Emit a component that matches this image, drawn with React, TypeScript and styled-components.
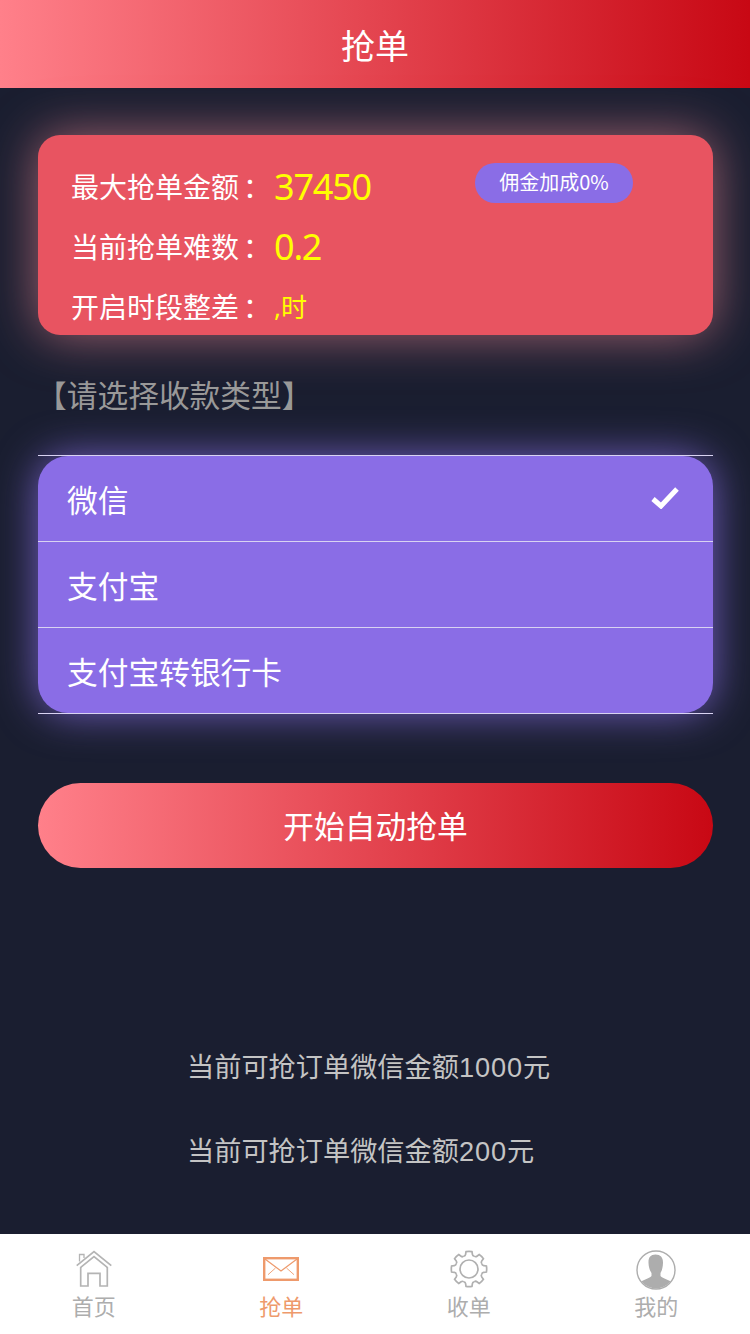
import React from 'react';
import styled, { createGlobalStyle } from 'styled-components';

const GlobalStyle = createGlobalStyle`
  html, body {
    margin: 0;
    padding: 0;
    background: #1a1e30;
  }
  * {
    box-sizing: border-box;
  }
`;

const Page = styled.div`
  width: 750px;
  height: 1334px;
  display: flex;
  flex-direction: column;
  background: #1a1e30;
  font-family: 'Noto Sans CJK SC', 'Noto Sans', sans-serif;
  overflow: hidden;
`;

const Header = styled.div`
  height: 88px;
  flex: none;
  display: flex;
  align-items: center;
  justify-content: center;
  background: linear-gradient(to right, #ff808a, #c80814);
  color: #fff;
  font-size: 34px;
`;

const Main = styled.div`
  flex: 1;
  padding: 47px 37px 0 38px;
`;

const InfoCard = styled.div`
  position: relative;
  height: 200px;
  border-radius: 22px;
  background: #e85461;
  box-shadow: 0 0 50px rgba(255, 145, 155, 0.6);
  padding: 21px 33px 0;
  overflow: hidden;
`;

const InfoRow = styled.div`
  height: 60px;
  display: flex;
  align-items: center;
  color: #fff;
  font-size: 28px;
`;

const InfoLabel = styled.span`
  width: 203px;
  flex: none;
  white-space: nowrap;
`;

const Colon = styled.span`
  display: inline-block;
  transform: translateX(4px);
`;

const InfoValue = styled.span<{ $small?: boolean }>`
  color: #ffff00;
  font-family: 'Noto Sans', 'Noto Sans CJK SC', sans-serif;
  font-size: ${props => (props.$small ? '26px' : '36px')};
  letter-spacing: ${props => (props.$small ? '0' : '-1.2px')};
`;

const BonusBadge = styled.div`
  position: absolute;
  left: 437px;
  top: 28px;
  width: 158px;
  height: 40px;
  padding-bottom: 4px;
  border-radius: 20px;
  background: #8a6de6;
  color: #fff;
  font-size: 20px;
  display: flex;
  align-items: center;
  justify-content: center;
`;

const SectionTitle = styled.div`
  height: 120px;
  margin-left: -2px;
  padding-top: 35px;
  color: #999;
  font-size: 30.72px;
  line-height: 48px;
  white-space: nowrap;
`;

const TypeList = styled.div`
  border-radius: 30px;
  background: #8a6de6;
  box-shadow: 0 0 42px rgba(150, 120, 250, 0.72);
`;

const TypeRow = styled.div`
  height: 85px;
  display: flex;
  align-items: center;
  justify-content: space-between;
  padding: 0 34px 1px 29px;
  color: #fff;
  font-size: 30.72px;
`;

const Rule = styled.div`
  position: relative;
  height: 1px;
  background: #d9d3f2;
`;

const StartButton = styled.div`
  margin-top: 69px;
  height: 85px;
  padding-bottom: 2px;
  border-radius: 43px;
  background: linear-gradient(to right, #ff808a, #c80814);
  color: #fff;
  font-size: 30.72px;
  display: flex;
  align-items: center;
  justify-content: center;
`;

const OrderList = styled.div`
  margin-top: 179px;
  display: flex;
  flex-direction: column;
  gap: 42px;
  padding-left: 149px;
`;

const OrderLine = styled.div`
  height: 42px;
  line-height: 42px;
  color: #c4c4c4;
  font-family: 'Liberation Sans', 'Noto Sans CJK SC', sans-serif;
  font-size: 27.2px;
  white-space: nowrap;
`;

const Amount = styled.span`
  letter-spacing: 0.9px;
`;

const TabBar = styled.div`
  height: 100px;
  flex: none;
  background: #fff;
  display: grid;
  grid-template-columns: repeat(4, 1fr);
`;

const Tab = styled.div<{ $active?: boolean }>`
  display: flex;
  flex-direction: column;
  align-items: center;
  color: ${props => (props.$active ? '#ee9a6c' : '#adadad')};
  font-size: 22px;
  line-height: 30px;
`;

const TabIcon = styled.div`
  height: 56px;
  padding-top: 16px;
  display: flex;
  align-items: flex-start;
  justify-content: center;
`;

const HomeIcon = () => (
  <svg width="38" height="38" viewBox="0 0 38 38" fill="none" stroke="#b4b4b4" strokeWidth="1.7">
    <path d="M1.7 15.7 L19 1.5 L36.3 15.7" />
    <path d="M5.7 17.3 L19 6.7 L32.3 17.3" />
    <path d="M4.5 11.5 V4.5 H9 V8" strokeWidth="1.3" />
    <path d="M5.7 17 V36 H13 V23.3 H25 V36 H32.3 V17" />
  </svg>
);

const MailIcon = () => (
  <svg width="36" height="24" viewBox="0 0 36 24" fill="none" stroke="#ee9a6c" style={{ marginTop: 7 }}>
    <rect x="1.2" y="1.2" width="33.6" height="21.6" strokeWidth="2.4" />
    <path d="M2 2 L18 14 L34 2" strokeWidth="1.2" />
    <path d="M5 17.7 L12.5 11 M31 17.7 L23.5 11" strokeWidth="0.9" />
  </svg>
);

const GearIcon = () => {
  const teeth = [0, 45, 90, 135, 180, 225, 270, 315];
  return (
    <svg width="38" height="38" viewBox="-19 -19 38 38" fill="none" stroke="#b0b0b0" strokeWidth="1.7">
      <circle r="9" />
      {teeth.map(a => (
        <path
          key={a}
          transform={`rotate(${a})`}
          d="M-5.3 -12.8 Q-3.6 -13 -3.4 -14.6 L-3 -17.4 Q0 -18 3 -17.4 L3.4 -14.6 Q3.6 -13 5.3 -12.8"
        />
      ))}
    </svg>
  );
};

const UserIcon = () => (
  <svg width="40" height="40" viewBox="0 0 40 40">
    <defs>
      <clipPath id="user-clip">
        <circle cx="20" cy="20" r="18.5" />
      </clipPath>
    </defs>
    <g clipPath="url(#user-clip)" fill="#adadad">
      <path d="M19.5 4.5 C14.5 4.5 12.3 7.5 12.5 13 C12.7 17.5 13.8 20.5 15.5 23 V26 C13 28.5 7 29.5 3.5 33 V40 H36.5 V33 C33 29.5 27 28.5 24.5 26 V23 C26 20.5 26.8 17.5 27 13 C27.2 7.5 24.5 4.5 19.5 4.5 Z" />
    </g>
    <circle cx="20" cy="20" r="19" fill="none" stroke="#adadad" strokeWidth="1.4" />
  </svg>
);

const CheckIcon = () => (
  <svg width="28" height="22" viewBox="0 0 28 22" fill="none" stroke="#fff" strokeWidth="5">
    <path d="M2 12 L10 19 L26 2" />
  </svg>
);

const types = ['微信', '支付宝', '支付宝转银行卡'];

const amounts = ['1000', '200'];

const tabs = [
  { label: '首页', icon: <HomeIcon /> },
  { label: '抢单', icon: <MailIcon />, active: true },
  { label: '收单', icon: <GearIcon /> },
  { label: '我的', icon: <UserIcon /> },
];

export default function App() {
  return (
    <Page>
      <GlobalStyle />
      <Header>抢单</Header>
      <Main>
        <InfoCard>
          <InfoRow>
            <InfoLabel>最大抢单金额<Colon>：</Colon></InfoLabel>
            <InfoValue>37450</InfoValue>
          </InfoRow>
          <InfoRow>
            <InfoLabel>当前抢单难数<Colon>：</Colon></InfoLabel>
            <InfoValue>0.2</InfoValue>
          </InfoRow>
          <InfoRow>
            <InfoLabel>开启时段整差<Colon>：</Colon></InfoLabel>
            <InfoValue $small>,时</InfoValue>
          </InfoRow>
          <BonusBadge>佣金加成0%</BonusBadge>
        </InfoCard>
        <SectionTitle>【请选择收款类型】</SectionTitle>
        <Rule />
        <TypeList>
          {types.map((name, i) => (
            <React.Fragment key={name}>
              <TypeRow>
                {name}
                {i === 0 && <CheckIcon />}
              </TypeRow>
              {i < types.length - 1 && <Rule />}
            </React.Fragment>
          ))}
        </TypeList>
        <Rule />
        <StartButton>开始自动抢单</StartButton>
        <OrderList>
          {amounts.map(amount => (
            <OrderLine key={amount}>
              当前可抢订单微信金额<Amount>{amount}</Amount>元
            </OrderLine>
          ))}
        </OrderList>
      </Main>
      <TabBar>
        {tabs.map(tab => (
          <Tab key={tab.label} $active={tab.active}>
            <TabIcon>{tab.icon}</TabIcon>
            {tab.label}
          </Tab>
        ))}
      </TabBar>
    </Page>
  );
}
